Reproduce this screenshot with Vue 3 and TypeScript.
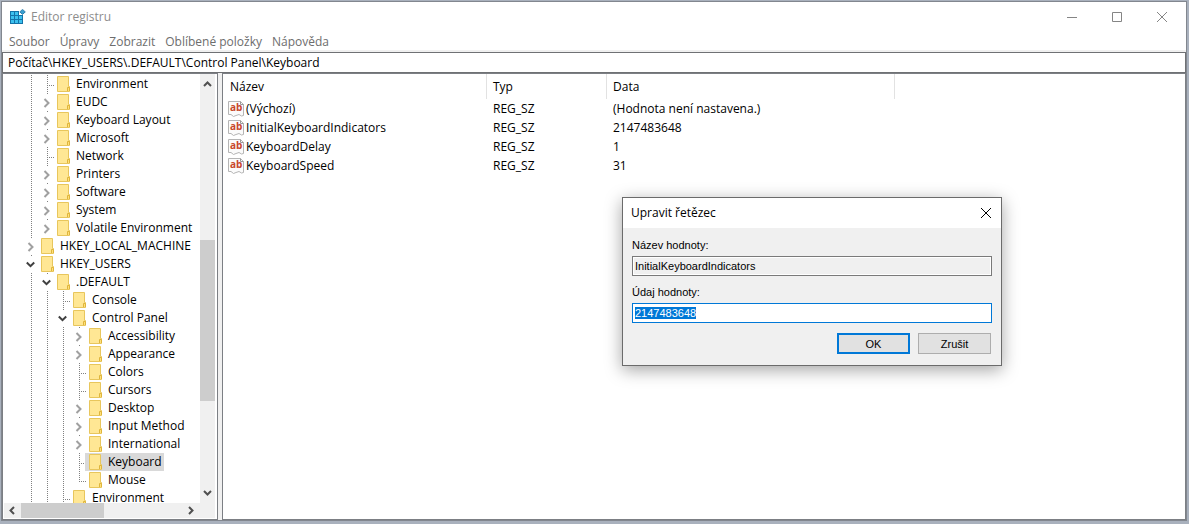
<script setup lang="ts">
import { onMounted, ref } from 'vue'

type Kind = 'leaf' | 'closed' | 'open'

interface TreeNode {
  name: string
  level: number
  kind: Kind
  last?: boolean
  selected?: boolean
}

interface RegistryValue {
  name: string
  type: string
  data: string
}

const menus = ['Soubor', 'Úpravy', 'Zobrazit', 'Oblíbené položky', 'Nápověda']
const path = ref('Počítač\\HKEY_USERS\\.DEFAULT\\Control Panel\\Keyboard')

const nodes: TreeNode[] = [
  { name: 'Environment', level: 1, kind: 'leaf' },
  { name: 'EUDC', level: 1, kind: 'closed' },
  { name: 'Keyboard Layout', level: 1, kind: 'closed' },
  { name: 'Microsoft', level: 1, kind: 'closed' },
  { name: 'Network', level: 1, kind: 'leaf' },
  { name: 'Printers', level: 1, kind: 'closed' },
  { name: 'Software', level: 1, kind: 'closed' },
  { name: 'System', level: 1, kind: 'closed' },
  { name: 'Volatile Environment', level: 1, kind: 'closed', last: true },
  { name: 'HKEY_LOCAL_MACHINE', level: 0, kind: 'closed' },
  { name: 'HKEY_USERS', level: 0, kind: 'open' },
  { name: '.DEFAULT', level: 1, kind: 'open' },
  { name: 'Console', level: 2, kind: 'leaf' },
  { name: 'Control Panel', level: 2, kind: 'open' },
  { name: 'Accessibility', level: 3, kind: 'closed' },
  { name: 'Appearance', level: 3, kind: 'closed' },
  { name: 'Colors', level: 3, kind: 'leaf' },
  { name: 'Cursors', level: 3, kind: 'leaf' },
  { name: 'Desktop', level: 3, kind: 'closed' },
  { name: 'Input Method', level: 3, kind: 'closed' },
  { name: 'International', level: 3, kind: 'closed' },
  { name: 'Keyboard', level: 3, kind: 'leaf', selected: true },
  { name: 'Mouse', level: 3, kind: 'leaf', last: true },
  { name: 'Environment', level: 2, kind: 'leaf' },
]

const values: RegistryValue[] = [
  { name: '(Výchozí)', type: 'REG_SZ', data: '(Hodnota není nastavena.)' },
  { name: 'InitialKeyboardIndicators', type: 'REG_SZ', data: '2147483648' },
  { name: 'KeyboardDelay', type: 'REG_SZ', data: '1' },
  { name: 'KeyboardSpeed', type: 'REG_SZ', data: '31' },
]

const valueName = ref('InitialKeyboardIndicators')
const valueData = ref('2147483648')
const dataInput = ref<HTMLInputElement | null>(null)

onMounted(() => {
  dataInput.value?.focus()
  dataInput.value?.select()
})
</script>

<template>
  <div class="desktop">
    <main class="window">
      <header class="titlebar">
        <svg class="app-icon" width="16" height="16" viewBox="0 0 16 16" aria-hidden="true">
          <rect x="0" y="2" width="13" height="13" fill="#1473a8" />
          <g fill="#3cc0ee">
            <rect x="1" y="3" width="3" height="3" />
            <rect x="5" y="3" width="3" height="3" />
            <rect x="1" y="7" width="3" height="3" />
            <rect x="5" y="7" width="3" height="3" />
            <rect x="9" y="7" width="3" height="3" />
            <rect x="1" y="11" width="3" height="3" />
            <rect x="5" y="11" width="3" height="3" />
            <rect x="9" y="11" width="3" height="3" />
          </g>
          <rect x="9" y="0" width="5" height="6" fill="#fff" />
          <path d="M12.5 .4 L15.3 2.9 L12.5 5.4 L9.8 2.9 Z" fill="#3a9fd0" stroke="#1a6f9f" stroke-width=".8" />
        </svg>
        <h1 class="title">Editor registru</h1>
        <div class="caption-buttons">
          <button type="button" aria-label="Minimalizovat">
            <svg width="10" height="10" viewBox="0 0 10 10"><path d="M0 5.5H10" /></svg>
          </button>
          <button type="button" aria-label="Maximalizovat">
            <svg width="10" height="10" viewBox="0 0 10 10"><path d="M.5 .5H9.5V9.5H.5Z" /></svg>
          </button>
          <button type="button" aria-label="Zavřít">
            <svg width="10" height="10" viewBox="0 0 10 10"><path d="M0 0L10 10M10 0L0 10" /></svg>
          </button>
        </div>
      </header>

      <nav class="menubar">
        <button v-for="menu in menus" :key="menu" type="button">{{ menu }}</button>
      </nav>

      <input v-model="path" class="address" type="text" aria-label="Adresa" />

      <div class="panes">
        <section class="tree-pane">
          <ul class="tree" role="tree">
            <li
              v-for="(node, i) in nodes"
              :key="i"
              class="node"
              role="treeitem"
              :aria-level="node.level + 1"
              :aria-selected="!!node.selected"
            >
              <span v-for="n in node.level" :key="n" class="guide through"></span>
              <span class="guide" :class="[node.kind, { last: node.last }]">
                <svg v-if="node.kind === 'closed'" width="8" height="10" viewBox="0 0 8 10">
                  <path d="M1.5 1L5.5 5L1.5 9" fill="none" stroke="#a0a0a0" stroke-width="2" />
                </svg>
                <svg v-else-if="node.kind === 'open'" width="10" height="10" viewBox="0 0 10 10">
                  <path d="M.8 2.5L4.5 6.2L8.2 2.5" fill="none" stroke="#404040" stroke-width="2" />
                </svg>
              </span>
              <span class="item" :class="{ selected: node.selected }">
                <svg class="folder" width="14" height="16" viewBox="0 0 14 16" aria-hidden="true">
                  <path d="M.5 .5H11.5V10.5H12.5V15.5H.5Z" fill="#ffe794" stroke="#e8c65c" />
                  <path d="M10.5 15V11.5H12.5V15" fill="#ffe07a" stroke="#dfb53c" />
                </svg>
                <span class="label">{{ node.name }}</span>
              </span>
            </li>
          </ul>
          <div class="vscroll" aria-hidden="true">
            <svg width="15" height="17" viewBox="0 0 15 17"><path d="M4 12L7.5 8.5L11 12" /></svg>
            <div class="track">
              <span class="before"></span><span class="thumb"></span><span class="after"></span>
            </div>
            <svg width="15" height="17" viewBox="0 0 15 17"><path d="M4 5L7.5 8.5L11 5" /></svg>
          </div>
          <div class="hscroll" aria-hidden="true">
            <svg width="17" height="15" viewBox="0 0 17 15"><path d="M10 4L6.5 7.5L10 11" /></svg>
            <div class="track">
              <span class="thumb"></span><span class="after"></span>
            </div>
            <svg width="17" height="15" viewBox="0 0 17 15"><path d="M6 4L9.5 7.5L6 11" /></svg>
          </div>
          <div class="corner"></div>
        </section>

        <section class="list-pane">
          <table>
            <colgroup>
              <col class="col-name" />
              <col class="col-type" />
              <col class="col-data" />
              <col />
            </colgroup>
            <thead>
              <tr>
                <th scope="col">Název</th>
                <th scope="col">Typ</th>
                <th scope="col">Data</th>
                <td></td>
              </tr>
            </thead>
            <tbody>
              <tr v-for="value in values" :key="value.name">
                <td class="name">
                  <div class="name-cell">
                    <svg width="16" height="16" viewBox="0 0 16 16" aria-hidden="true">
                      <path
                        d="M.5 .5H12.5L15.5 3.5V14.5L13.5 15L11 13.5L8 14.5L5.5 15.5L3 13.5H.5Z"
                        fill="#fbfbfb"
                        stroke="#b5b5b5"
                      />
                      <path d="M12.5 .5V3.5H15.5" fill="none" stroke="#9a9a9a" />
                      <text x="2" y="10" class="ab">ab</text>
                    </svg>
                    <span>{{ value.name }}</span>
                  </div>
                </td>
                <td>{{ value.type }}</td>
                <td>{{ value.data }}</td>
                <td></td>
              </tr>
            </tbody>
          </table>
        </section>
      </div>
    </main>

    <form class="dialog" role="dialog" aria-labelledby="dialog-title" @submit.prevent>
      <header class="dialog-title">
        <h2 id="dialog-title">Upravit řetězec</h2>
        <button type="button" aria-label="Zavřít">
          <svg width="10" height="10" viewBox="0 0 10 10"><path d="M0 0L10 10M10 0L0 10" /></svg>
        </button>
      </header>
      <div class="dialog-body">
        <label for="value-name">Název hodnoty:</label>
        <input id="value-name" v-model="valueName" class="readonly" type="text" readonly />
        <label for="value-data">Údaj hodnoty:</label>
        <input id="value-data" ref="dataInput" v-model="valueData" class="editable" type="text" />
        <div class="actions">
          <button type="submit" class="default">OK</button>
          <button type="button">Zrušit</button>
        </div>
      </div>
    </form>
  </div>
</template>

<style>
body {
  margin: 0;
}
</style>

<style scoped>
* {
  box-sizing: border-box;
}

.desktop {
  position: relative;
  display: flex;
  height: 100vh;
  padding: 1px 2px 3px 1px;
  background: #a9b1bd;
  font: 12px/18px 'Open Sans', 'Noto Sans', sans-serif;
  color: #000;
  overflow: hidden;
}

button,
input {
  font: inherit;
  color: inherit;
  margin: 0;
  border-radius: 0;
}

button {
  padding: 0;
  border: 0;
  background: none;
}

.window {
  flex: 1;
  min-width: 0;
  display: flex;
  flex-direction: column;
  border: 1px solid #82878f;
  background: #fff;
}

.titlebar {
  display: flex;
  align-items: center;
  height: 29px;
  padding: 0 2px 0 8px;
  flex: none;
}

.title {
  flex: 1;
  margin: 0 0 0 5px;
  font-size: 12px;
  font-weight: 400;
  color: #8c8c8c;
}

.caption-buttons {
  display: flex;
  height: 100%;
}

.caption-buttons button {
  width: 45px;
  display: grid;
  place-items: center;
}

.caption-buttons path {
  fill: none;
  stroke: #858585;
}

.menubar {
  display: flex;
  gap: 10px;
  height: 21px;
  padding: 2px 0 0 7px;
  flex: none;
  border-bottom: 2px solid #f0f0f0;
  color: #6d6d6d;
}

.address {
  flex: none;
  width: 100%;
  height: 21px;
  padding: 0 5px;
  border: 1px solid #6f7174;
  outline: 0;
  background: #fff;
}

.panes {
  flex: 1;
  min-height: 0;
  display: flex;
  gap: 4px;
  background: #f0f0f0;
}

.tree-pane {
  width: 216px;
  flex: none;
  display: grid;
  grid-template: minmax(0, 1fr) 15px / minmax(0, 1fr) 15px;
  border: 1px solid #7c7f84;
  background: #fff;
  padding: 0 2px 1px 1px;
}

.tree {
  margin: 0;
  padding: 1px 0 0 19px;
  list-style: none;
  overflow: hidden;
}

.node {
  display: flex;
  height: 18px;
}

.guide {
  width: 16px;
  flex: none;
  display: flex;
  align-items: center;
  justify-content: center;
}

.through,
.leaf {
  background: repeating-linear-gradient(#808080 0 1px, transparent 1px 2px) 8px 0 / 1px 100% no-repeat;
}

.leaf {
  background:
    repeating-linear-gradient(#808080 0 1px, transparent 1px 2px) 8px 0 / 1px 100% no-repeat,
    repeating-linear-gradient(90deg, #808080 0 1px, transparent 1px 2px) 8px 10px / 8px 1px no-repeat;
}

.leaf.last {
  background:
    repeating-linear-gradient(#808080 0 1px, transparent 1px 2px) 8px 0 / 1px 11px no-repeat,
    repeating-linear-gradient(90deg, #808080 0 1px, transparent 1px 2px) 8px 10px / 8px 1px no-repeat;
}

.closed,
.open {
  padding-top: 2px;
  background: linear-gradient(#808080, #808080) 8px 0 / 1px 1px no-repeat;
}

.item {
  display: flex;
  align-items: center;
  margin-left: -2px;
  padding: 0 2px 0 4px;
}

.item.selected {
  background: #d9d9d9;
}

.label {
  margin-left: 5px;
  white-space: nowrap;
}

.folder {
  flex: none;
}

.vscroll,
.hscroll,
.corner {
  background: #f0f0f0;
}

.vscroll,
.hscroll,
.track {
  display: flex;
}

.vscroll,
.vscroll .track {
  flex-direction: column;
}

.vscroll path,
.hscroll path {
  fill: none;
  stroke: #505050;
  stroke-width: 2;
}

.vscroll svg,
.hscroll svg {
  flex: none;
}

.track {
  flex: 1;
  min-height: 0;
}

.thumb {
  background: #cdcdcd;
}

.vscroll .before {
  flex: 149;
}

.vscroll .thumb {
  flex: 161;
}

.vscroll .after {
  flex: 85;
}

.hscroll .thumb {
  flex: 83;
}

.hscroll .after {
  flex: 79;
}

.list-pane {
  flex: 1;
  min-width: 0;
  border: 1px solid #7c7f84;
  background: #fff;
  overflow: hidden;
}

table {
  width: 100%;
  table-layout: fixed;
  border-collapse: collapse;
}

.col-name {
  width: 264px;
}

.col-type {
  width: 120px;
}

.col-data {
  width: 288px;
}

th,
td {
  padding: 0 6px;
  text-align: left;
  font-weight: 400;
  white-space: nowrap;
}

th {
  height: 25px;
  background: linear-gradient(#e2e2e2, #e2e2e2) right top / 1px 100% no-repeat;
}

th:first-child {
  padding-left: 7px;
}

tbody td {
  height: 19px;
  line-height: 19px;
}

tbody td.name {
  padding-left: 5px;
}

.name-cell {
  display: flex;
  align-items: center;
  gap: 2px;
}

.ab {
  font: 700 10px 'Open Sans', sans-serif;
  fill: #c8472b;
}

.dialog {
  position: absolute;
  left: 622px;
  top: 197px;
  width: 380px;
  border: 1px solid #6b6b6b;
  background: #f0f0f0;
  box-shadow: 0 4px 16px rgba(0, 0, 0, 0.36);
  font: 11px/14px 'Liberation Sans', Arial, sans-serif;
}

.dialog-title {
  display: flex;
  justify-content: space-between;
  height: 30px;
  padding-left: 8px;
  background: #fff;
}

.dialog-title h2 {
  margin: 0;
  font: 400 12px/30px 'Open Sans', 'Noto Sans', sans-serif;
}

.dialog-title button {
  width: 30px;
  display: grid;
  place-items: center;
}

.dialog-title path {
  stroke: #000;
}

.dialog-body {
  display: flex;
  flex-direction: column;
  padding: 10px 9px 11px;
}

.dialog-body input {
  height: 20px;
  padding: 0 2px;
  outline: 0;
}

.dialog-body label {
  margin-bottom: 4px;
}

.readonly {
  margin-bottom: 9px;
  border: 1px solid #7a7a7a;
  background: #f0f0f0;
  box-shadow: inset 0 0 0 1px #fff;
}

.editable {
  border: 1px solid #0078d7;
  background: #fff;
}

.editable::selection {
  background: #0078d7;
  color: #fff;
}

.actions {
  display: flex;
  justify-content: flex-end;
  gap: 8px;
  margin-top: 10px;
  padding-right: 1px;
}

.actions button {
  width: 73px;
  height: 21px;
  border: 1px solid #adadad;
  background: #e1e1e1;
}

.actions .default {
  border: 2px solid #0078d7;
}
</style>
